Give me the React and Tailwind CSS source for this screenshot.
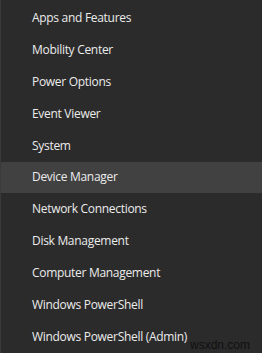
import React from "react";

const items = [
  "Apps and Features",
  "Mobility Center",
  "Power Options",
  "Event Viewer",
  "System",
  "Device Manager",
  "Network Connections",
  "Disk Management",
  "Computer Management",
  "Windows PowerShell",
  "Windows PowerShell (Admin)",
];

export default function App() {
  return (
    <div className="relative w-[263px] h-[355px] bg-white overflow-hidden">
      <div
        className="h-[353px] w-[262px] bg-[#2b2b2b] border-l border-[#3a3a3a] pt-[2px] flex flex-col"
        style={{ fontFamily: '"Segoe UI", "Open Sans", "Noto Sans", sans-serif' }}
      >
        {items.map((t) => (
          <div
            key={t}
            className={`h-[32px] flex items-center pl-[31px] text-[12px] tracking-[-0.3px] text-[#ececec] ${
              t === "Device Manager" ? "bg-[#414141]" : ""
            }`}
          >
            {t}
          </div>
        ))}
      </div>
      <div
        className="absolute left-[190px] top-[339px] text-[12px] leading-none text-[#111111]"
        style={{ fontFamily: '"Liberation Sans", Arial, sans-serif' }}
      >
        wsxdn.com
      </div>
    </div>
  );
}
